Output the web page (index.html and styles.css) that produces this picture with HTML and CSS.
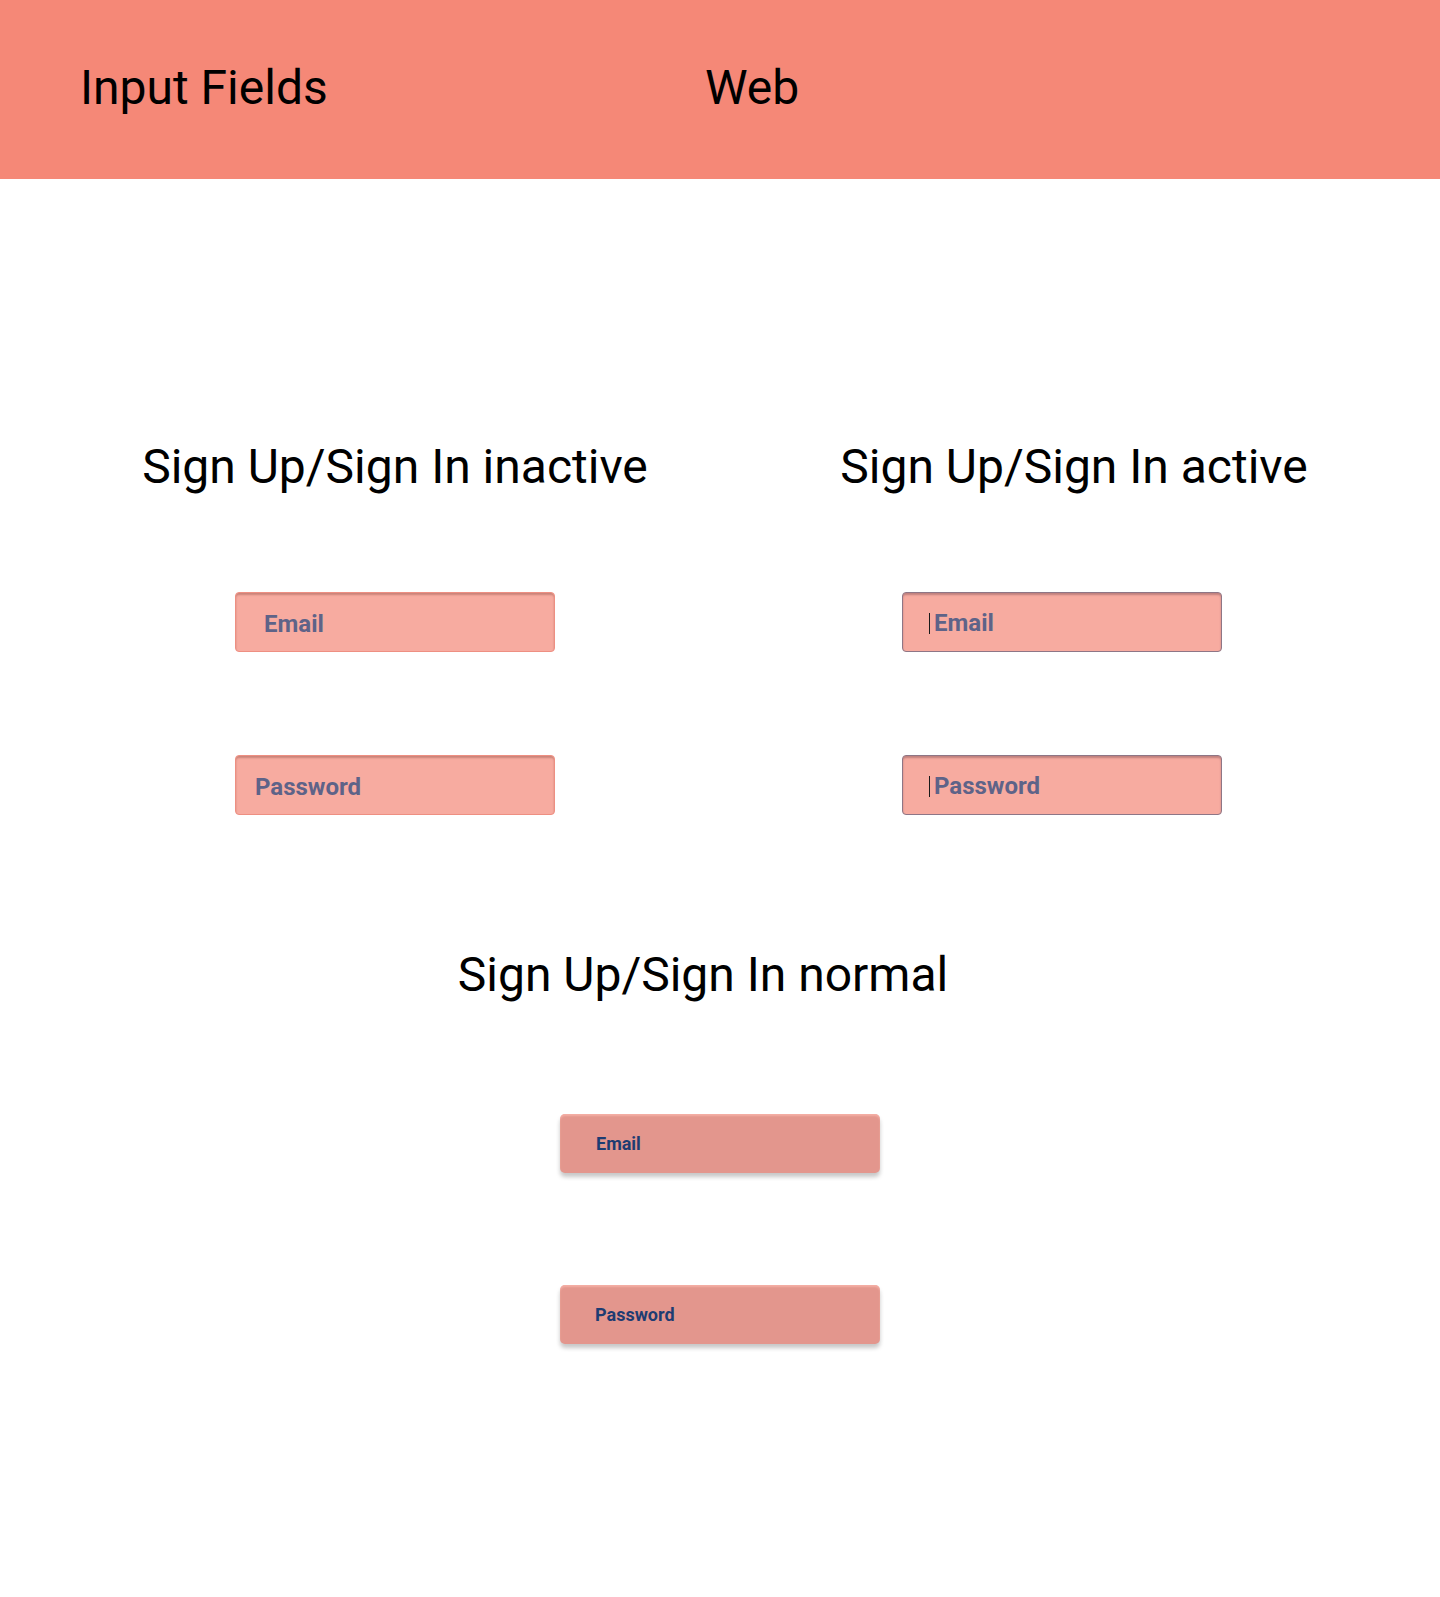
FILE: index.html
```html
<!DOCTYPE html>
<html lang="en">
<head>
<meta charset="utf-8">
<title>Input Fields</title>
<link rel="stylesheet" href="styles.css">
</head>
<body>
<header class="topbar">
  <span class="topbar-title">Input Fields</span>
  <span class="topbar-platform">Web</span>
</header>
<main class="page">
  <section class="row">
    <div class="group group-left">
      <h2 class="group-title">Sign Up/Sign In inactive</h2>
      <div class="field field-inactive field-email"><span class="field-label">Email</span></div>
      <div class="field field-inactive field-password"><span class="field-label">Password</span></div>
    </div>
    <div class="group group-right">
      <h2 class="group-title group-title-shift">Sign Up/Sign In active</h2>
      <div class="field field-active"><span class="caret"></span><span class="field-label">Email</span></div>
      <div class="field field-active"><span class="caret"></span><span class="field-label">Password</span></div>
    </div>
  </section>
  <section class="group group-center">
    <h2 class="group-title group-title-normal">Sign Up/Sign In normal</h2>
    <div class="field field-normal field-normal-email"><span class="field-label">Email</span></div>
    <div class="field field-normal field-normal-password"><span class="field-label">Password</span></div>
  </section>
</main>
</body>
</html>
```
FILE: styles.css
```css
* { box-sizing: border-box; }
html, body { margin: 0; padding: 0; background: #ffffff; }
body {
  font-family: Roboto, "Liberation Sans", Arial, sans-serif;
  color: #000;
  min-height: 1597px;
}
.topbar {
  height: 179px;
  background: #F58877;
  display: flex;
  align-items: center;
  padding-left: 80px;
  padding-bottom: 4px;
  font-size: 48px;
  line-height: 56px;
  font-weight: 400;
}
.topbar-title { width: 625px; }
.page { padding-top: 260px; }
.row {
  display: flex;
}
.group {
  display: flex;
  flex-direction: column;
  align-items: center;
  width: 640px;
}
.group-left { margin-left: 75px; }
.group-right { margin-left: 27px; }
.group-center { margin-left: 400px; margin-top: 132px; }
.group-title {
  margin: 0;
  font-size: 48px;
  line-height: 56px;
  font-weight: 400;
  white-space: nowrap;
}
.group-title-shift { margin-left: 24px; }
.group-title-normal { margin-left: -34px; }
.field {
  width: 320px;
  height: 60px;
  border-radius: 4px;
  display: flex;
  align-items: center;
  font-weight: 700;
}
.field + .field { margin-top: 103px; }
.group-title + .field { margin-top: 97px; }
.field-inactive {
  background: #F7ABA0;
  border: 1px solid #EE8F82;
  box-shadow: inset 0 2px 2px rgba(120, 60, 50, 0.35);
  color: #5E6388;
  font-size: 24px;
  padding-top: 4px;
}
.field-email { padding-left: 28px; }
.field-password { padding-left: 19px; }
.field-active {
  background: #F7ABA0;
  border: 1px solid #8E7686;
  box-shadow: inset 0 2px 2px rgba(90, 50, 60, 0.35);
  color: #5E6388;
  font-size: 24px;
  padding-left: 26px;
  padding-top: 1px;
}
.caret {
  width: 1px;
  height: 21px;
  background: #1a1a1a;
  margin-right: 4px;
  margin-top: 1px;
}
.field-normal {
  background: #E3968D;
  border-radius: 5px;
  box-shadow: 0 4px 4px rgba(0, 0, 0, 0.22), inset 0 2px 2px rgba(255, 190, 180, 0.6);
  color: #1E3C72;
  font-size: 18px;
  height: 59px;
}
.group-title + .field-normal { margin-top: 111px; }
.field-normal + .field-normal { margin-top: 112px; }
.field-normal-email { padding-left: 36px; }
.field-normal-password { padding-left: 35px; }
.field-label { line-height: 1; }
```
